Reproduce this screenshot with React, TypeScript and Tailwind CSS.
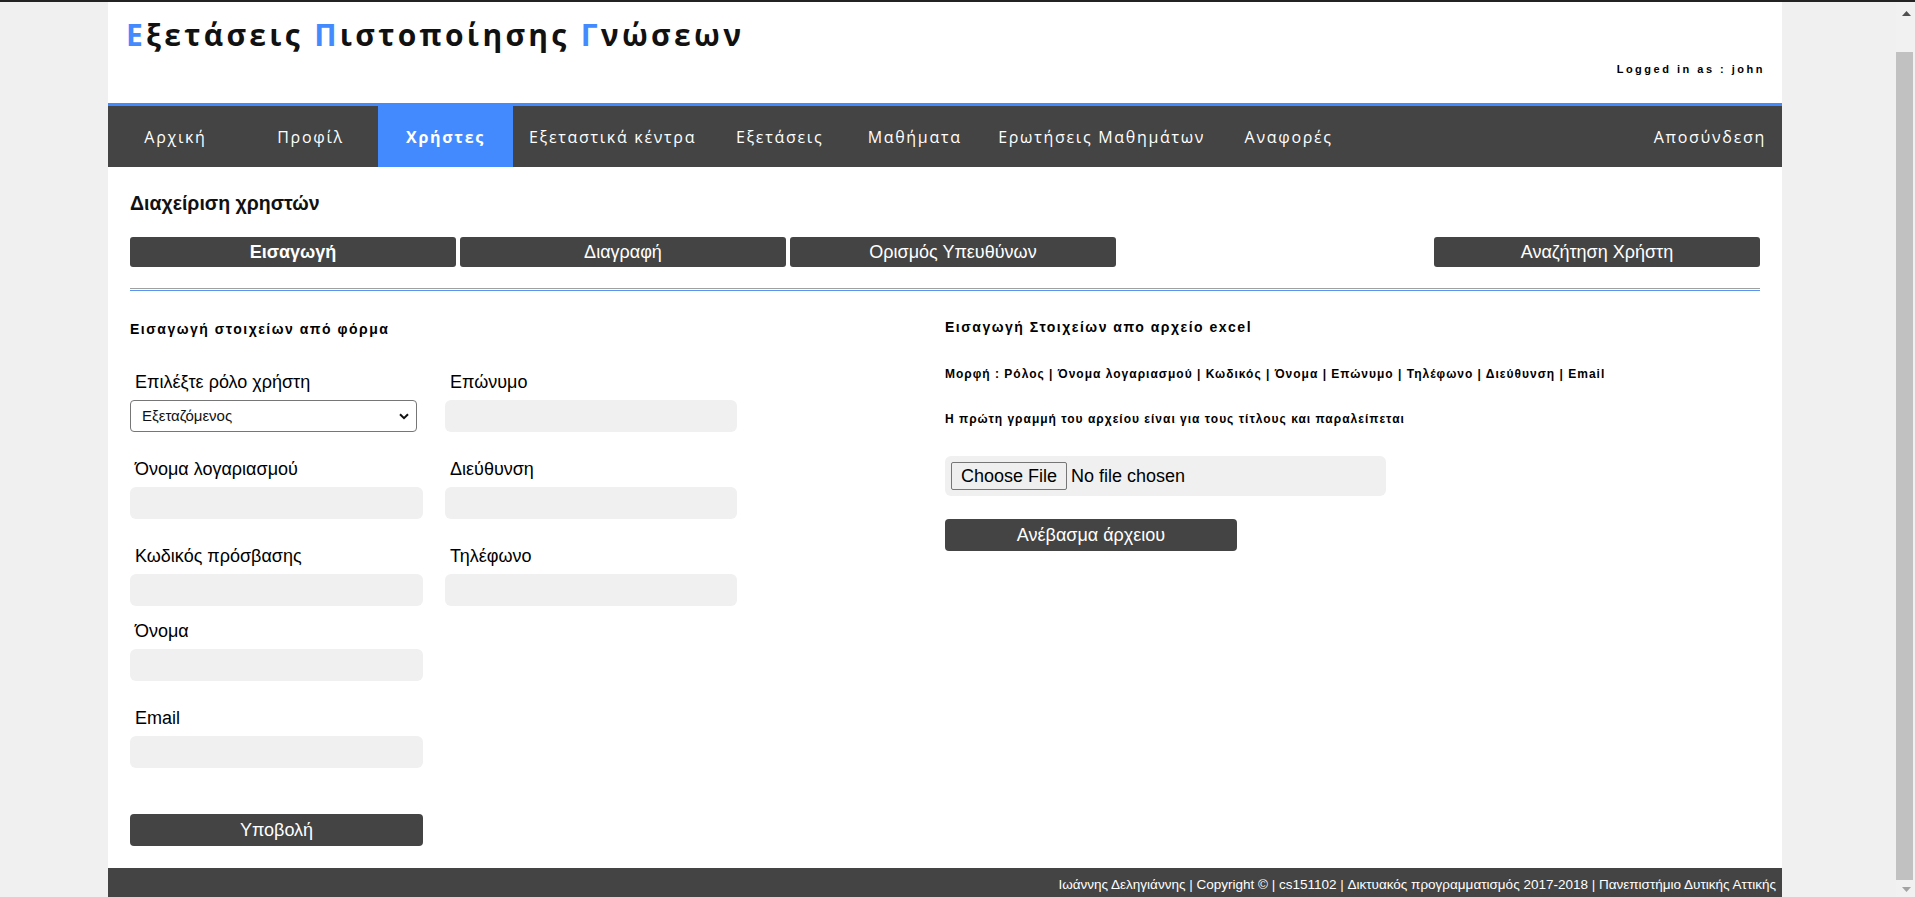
import React from "react";

const navItems = [
  "Αρχική",
  "Προφίλ",
  "Χρήστες",
  "Εξεταστικά κέντρα",
  "Εξετάσεις",
  "Μαθήματα",
  "Ερωτήσεις Μαθημάτων",
  "Αναφορές",
];

function Field({ label, w }: { label: string; w: string }) {
  return (
    <div className="flex flex-col">
      <label className="block h-[20px] pl-[5px] text-[18px] leading-[20px] text-black">{label}</label>
      <input
        type="text"
        className={`mt-[8px] h-[32px] ${w} rounded-[6px] bg-[#f0f0f0] border-0 outline-none`}
      />
    </div>
  );
}

export default function App() {
  return (
    <div className="w-[1915px] h-[897px] overflow-hidden flex flex-col bg-[#f0f0f0] font-['Liberation_Sans',Arial,sans-serif]">
      <div className="h-[2px] shrink-0 bg-[#232323]" />
      <div className="flex flex-1 min-h-0">
        <div className="flex-1 min-w-0">
          <div className="ml-[108px] w-[1674px] h-full bg-white flex flex-col">
            {/* Header */}
            <div className="h-[101px] shrink-0 flex flex-col pl-[18px] pr-[17px]">
              <h1 className="pt-[13px] text-[30px] leading-[40px] font-bold tracking-[3.3px] text-[#111] font-['Open_Sans',sans-serif]">
                <span className="text-[#448aff]">Ε</span>ξετάσεις <span className="text-[#448aff]">Π</span>ιστοποίησης{" "}
                <span className="text-[#448aff]">Γ</span>νώσεων
              </h1>
              <div className="mt-[8px] self-end text-[11px] leading-[13px] font-bold tracking-[2.5px] text-black">
                Logged in as : john
              </div>
            </div>
            {/* Nav */}
            <nav className="h-[64px] shrink-0 flex bg-[#444444] border-t-[3px] border-[#448aff] font-['Open_Sans',sans-serif] text-[16px] tracking-[1.7px] text-white">
              {navItems.map((item) => (
                <div
                  key={item}
                  className={`min-w-[135px] px-4 flex items-center justify-center ${
                    item === "Χρήστες" ? "bg-[#448aff] font-bold" : ""
                  }`}
                >
                  {item}
                </div>
              ))}
              <div className="ml-auto min-w-[135px] px-4 flex items-center justify-end">Αποσύνδεση</div>
            </nav>
            {/* Content */}
            <div className="flex-1 min-h-0 px-[22px] flex flex-col">
              <h2 className="mt-[26px] text-[19.5px] leading-[20px] font-bold text-[#111]">Διαχείριση χρηστών</h2>
              <div className="mt-[24px] flex gap-[4px] h-[30px] text-[18px] text-white">
                <button className="w-[20%] h-full rounded-[3px] bg-[#444444] font-bold">Εισαγωγή</button>
                <button className="w-[20%] h-full rounded-[3px] bg-[#444444]">Διαγραφή</button>
                <button className="w-[20%] h-full rounded-[3px] bg-[#444444]">Ορισμός Υπευθύνων</button>
                <button className="ml-auto w-[20%] h-full rounded-[3px] bg-[#444444]">Αναζήτηση Χρήστη</button>
              </div>
              <div className="mt-[21px] h-[3px] border-t border-b border-t-[#a0a0a0] border-b-[#5a94ec]" />
              <div className="mt-[28px] flex">
                {/* Left form */}
                <div className="w-1/2 flex flex-col">
                  <h3 className="mt-[2px] text-[14px] leading-[16px] font-bold tracking-[1.5px] text-black">
                    Εισαγωγή στοιχείων από φόρμα
                  </h3>
                  <div className="mt-[35px] grid grid-cols-[293px_292px] gap-x-[22px] gap-y-[27px]">
                    <div className="flex flex-col">
                      <label className="block h-[20px] pl-[5px] text-[18px] leading-[20px] text-black">
                        Επιλέξτε ρόλο χρήστη
                      </label>
                      <div className="mt-[8px] h-[32px] w-[287px] border border-[#767676] rounded-[4px] bg-white flex items-center justify-between pl-[11px] pr-[7px] text-[15px] text-[#111]">
                        <span>Εξεταζόμενος</span>
                        <svg width="10" height="7" viewBox="0 0 10 7" fill="none">
                          <path d="M1 1.2 L5 5.2 L9 1.2" stroke="#111" strokeWidth="2" />
                        </svg>
                      </div>
                    </div>
                    <Field label="Επώνυμο" w="w-[292px]" />
                    <Field label="Όνομα λογαριασμού" w="w-[293px]" />
                    <Field label="Διεύθυνση" w="w-[292px]" />
                    <Field label="Κωδικός πρόσβασης" w="w-[293px]" />
                    <Field label="Τηλέφωνο" w="w-[292px]" />
                  </div>
                  <div className="mt-[15px]">
                    <Field label="Όνομα" w="w-[293px]" />
                  </div>
                  <div className="mt-[27px]">
                    <Field label="Email" w="w-[293px]" />
                  </div>
                  <button className="mt-[46px] h-[32px] w-[293px] rounded-[4px] bg-[#444444] text-[18px] text-white">
                    Υποβολή
                  </button>
                </div>
                {/* Right excel */}
                <div className="w-1/2 flex flex-col">
                  <h3 className="text-[14px] leading-[16px] font-bold tracking-[1.5px] text-black">
                    Εισαγωγή Στοιχείων απο αρχείο excel
                  </h3>
                  <p className="mt-[32px] text-[12px] leading-[14px] font-bold tracking-[1px] text-black">
                    Μορφή : Ρόλος | Όνομα λογαριασμού | Κωδικός | Όνομα | Επώνυμο | Τηλέφωνο | Διεύθυνση | Email
                  </p>
                  <p className="mt-[31px] text-[12px] leading-[14px] font-bold tracking-[1px] text-black">
                    Η πρώτη γραμμή του αρχείου είναι για τους τίτλους και παραλείπεται
                  </p>
                  <div className="mt-[30px] h-[40px] w-[441px] rounded-[6px] bg-[#f0f0f0] flex items-center pl-[6px] text-[18px] text-black">
                    <span className="h-[28px] px-[9px] flex items-center border border-[#767676] rounded-[2px] bg-[#efefef]">
                      Choose File
                    </span>
                    <span className="ml-[4px]">No file chosen</span>
                  </div>
                  <button className="mt-[23px] h-[32px] w-[292px] rounded-[4px] bg-[#444444] text-[18px] text-white">
                    Ανέβασμα άρχειου
                  </button>
                </div>
              </div>
            </div>
            {/* Footer */}
            <div className="h-[29px] shrink-0 bg-[#444444] pt-[9px] pr-[6px] text-right text-[13.5px] leading-[15px] text-white">
              Ιωάννης Δεληγιάννης | Copyright © | cs151102 | Δικτυακός προγραμματισμός 2017-2018 | Πανεπιστήμιο Δυτικής Αττικής
            </div>
          </div>
        </div>
        {/* Scrollbar */}
        <div className="w-[19px] shrink-0 bg-[#f1f1f1] flex flex-col">
          <div className="h-[50px] flex justify-center pt-[9px] pl-[1px]">
            <svg width="9" height="5" viewBox="0 0 9 5">
              <path d="M0 5 L4.5 0 L9 5 Z" fill="#505050" />
            </svg>
          </div>
          <div className="h-[828px] w-[17px] bg-[#c1c1c1]" />
          <div className="flex-1 flex justify-center pt-[7px] pl-[1px]">
            <svg width="9" height="5" viewBox="0 0 9 5">
              <path d="M0 0 L4.5 5 L9 0 Z" fill="#a3a3a3" />
            </svg>
          </div>
        </div>
      </div>
    </div>
  );
}
